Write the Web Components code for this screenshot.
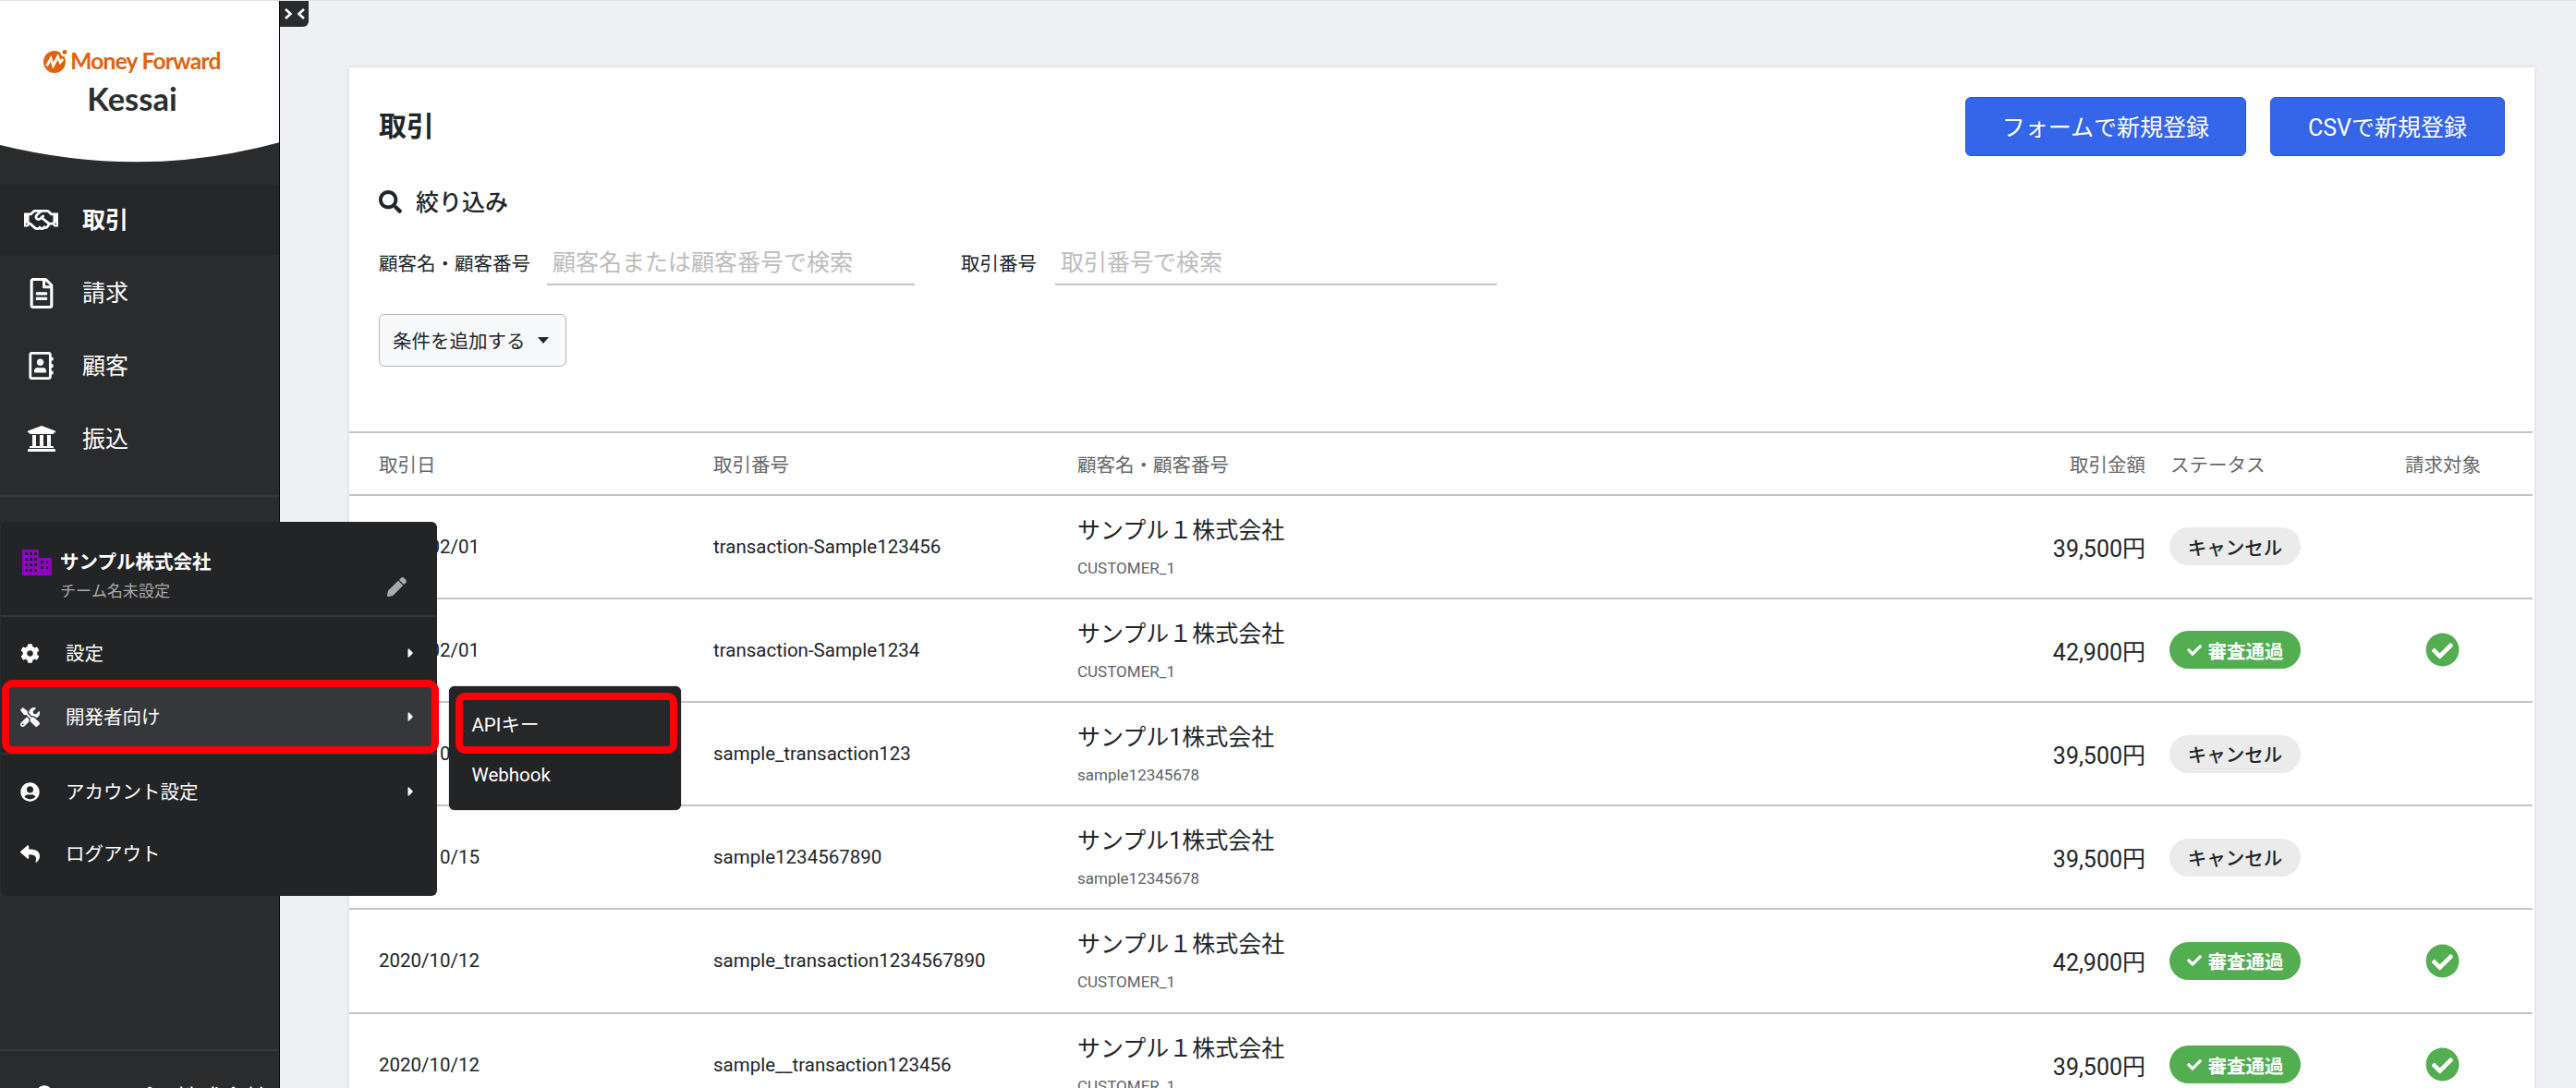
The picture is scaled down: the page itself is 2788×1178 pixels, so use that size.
<!DOCTYPE html>
<html lang="ja">
<head>
<meta charset="utf-8">
<title>取引 | Money Forward Kessai</title>
<style>
  html, body { margin: 0; height: 100%; overflow: hidden; }
  body { font-family: Roboto, "Noto Sans CJK JP", sans-serif; color: #212529; background: #eff0f3; }
</style>
</head>
<body>
<app-shell>
  <app-sidebar slot="side">
    <side-item icon="handshake" active>取引</side-item>
    <side-item icon="file">請求</side-item>
    <side-item icon="book">顧客</side-item>
    <side-item icon="bank">振込</side-item>
  </app-sidebar>

  <account-menu slot="overlay">
    <menu-item icon="cog" arrow>設定</menu-item>
    <menu-item icon="tools" arrow marked>開発者向け</menu-item>
    <menu-item slot="lower" icon="user" arrow>アカウント設定</menu-item>
    <menu-item slot="lower" icon="reply">ログアウト</menu-item>
    <sub-item slot="sub" marked>APIキー</sub-item>
    <sub-item slot="sub">Webhook</sub-item>
  </account-menu>

  <tx-card>
    <tx-row date="2021/02/01" no="transaction-Sample123456" name="サンプル１株式会社" code="CUSTOMER_1" amount="39,500円" status="cancel"></tx-row>
    <tx-row date="2021/02/01" no="transaction-Sample1234" name="サンプル１株式会社" code="CUSTOMER_1" amount="42,900円" status="ok"></tx-row>
    <tx-row date="2020/10/15" no="sample_transaction123" name="サンプル1株式会社" code="sample12345678" amount="39,500円" status="cancel"></tx-row>
    <tx-row date="2020/10/15" no="sample1234567890" name="サンプル1株式会社" code="sample12345678" amount="39,500円" status="cancel"></tx-row>
    <tx-row date="2020/10/12" no="sample_transaction1234567890" name="サンプル１株式会社" code="CUSTOMER_1" amount="42,900円" status="ok"></tx-row>
    <tx-row date="2020/10/12" no="sample__transaction123456" name="サンプル１株式会社" code="CUSTOMER_1" amount="39,500円" status="ok"></tx-row>
  </tx-card>
</app-shell>

<script>
// ----- Icones (svg inline) -----
const ICONS = {
  handshake: [640, 512, 'M519.2 127.9l-47.6-47.6A56.252 56.252 0 0 0 432 64H205.2c-14.8 0-29.1 5.9-39.6 16.3L118 127.9H0v255.7h64c17.6 0 31.8-14.2 31.9-31.7h9.1l84.6 76.4c30.9 25.1 73.8 25.7 105.6 3.8 12.5 10.8 26 15.9 41.1 15.9 18.2 0 35.3-7.4 48.8-24 22.1 8.7 48.2 2.6 64-16.8l26.2-32.3c5.6-6.9 9.1-14.8 10.9-23h57.9c.1 17.5 14.4 31.7 31.9 31.7h64V127.9H519.2zM48 351.6c-8.8 0-16-7.2-16-16s7.2-16 16-16 16 7.2 16 16c0 8.9-7.2 16-16 16zm390-6.9l-26.1 32.2c-2.8 3.4-7.8 4-11.3 1.2l-23.9-19.4-30 36.5c-6 7.3-15 4.8-18 2.4l-36.8-31.5-15.6 19.2c-13.9 17.1-39.2 19.7-55.3 6.6l-97.3-88H96V175.8h41.9l61.7-61.6c2-.8 3.7-1.5 5.7-2.3H262l-38.7 35.5c-29.4 26.9-31.1 72.3-4.4 101.3 14.8 16.2 61.2 41.2 101.5 4.4l8.2-7.5 108.2 87.8c3.4 2.8 3.9 7.9 1.2 11.3zm106-40.8h-69.2c-2.3-2.8-4.9-5.4-7.7-7.7l-102.7-83.4 12.5-11.4c6.5-6 7-16.1 1-22.6L367 167.1c-6-6.5-16.1-6.9-22.6-1l-55.2 50.6c-9.5 8.7-25.7 9.4-34.6 0-9.3-9.9-8.5-25.1 1.2-33.9l65.6-60.1c7.4-6.8 17-10.5 27-10.5l83.7-.2c2.1 0 4.1.8 5.5 2.3l61.7 61.6H544v128zm48 47.7c-8.8 0-16-7.2-16-16s7.2-16 16-16 16 7.2 16 16c0 8.9-7.2 16-16 16z'],
  file: [384, 512, 'M288 248v28c0 6.6-5.4 12-12 12H108c-6.6 0-12-5.4-12-12v-28c0-6.6 5.4-12 12-12h168c6.6 0 12 5.4 12 12zm-12 72H108c-6.6 0-12 5.4-12 12v28c0 6.6 5.4 12 12 12h168c6.6 0 12-5.4 12-12v-28c0-6.6-5.4-12-12-12zm108-188.1V464c0 26.5-21.5 48-48 48H48c-26.5 0-48-21.5-48-48V48C0 21.5 21.5 0 48 0h204.1C264.8 0 277 5.1 286 14.1L369.9 98c9 8.9 14.1 21.2 14.1 33.9zm-128-80V128h76.1L256 51.9zM336 464V176H232c-13.3 0-24-10.7-24-24V48H48v416h288z'],
  book: [448, 512, 'M436 160c6.6 0 12-5.4 12-12v-40c0-6.6-5.4-12-12-12h-20V48c0-26.5-21.5-48-48-48H48C21.5 0 0 21.5 0 48v416c0 26.5 21.5 48 48 48h320c26.5 0 48-21.5 48-48v-48h20c6.6 0 12-5.4 12-12v-40c0-6.6-5.4-12-12-12h-20v-64h20c6.6 0 12-5.4 12-12v-40c0-6.6-5.4-12-12-12h-20v-64h20zm-68 304H48V48h320v416zM208 256c35.3 0 64-28.7 64-64s-28.7-64-64-64-64 28.7-64 64 28.7 64 64 64zm-89.6 128h179.2c12.4 0 22.4-8.6 22.4-19.2v-19.2c0-31.8-30.1-57.6-67.2-57.6-10.8 0-18.7 8-44.8 8-26.9 0-33.4-8-44.8-8-37.1 0-67.2 25.8-67.2 57.6v19.2c0 10.6 10 19.2 22.4 19.2z'],
  bank: [512, 512, 'M496 128v16a8 8 0 0 1-8 8h-24v12c0 6.627-5.373 12-12 12H60c-6.627 0-12-5.373-12-12v-12H24a8 8 0 0 1-8-8v-16a8 8 0 0 1 4.941-7.392l232-88a7.996 7.996 0 0 1 6.118 0l232 88A8 8 0 0 1 496 128zm-24 304H40c-13.255 0-24 10.745-24 24v16a8 8 0 0 0 8 8h464a8 8 0 0 0 8-8v-16c0-13.255-10.745-24-24-24zM96 192v192H60c-6.627 0-12 5.373-12 12v20h416v-20c0-6.627-5.373-12-12-12h-36V192h-64v192h-64V192h-64v192h-64V192H96z'],
  cog: [512, 512, 'M487.4 315.7l-42.6-24.6c4.3-23.2 4.3-47 0-70.2l42.6-24.6c4.9-2.8 7.1-8.6 5.5-14-11.1-35.6-30-67.8-54.7-94.6-3.8-4.1-10-5.1-14.8-2.3L380.8 110c-17.9-15.4-38.5-27.3-60.8-35.1V25.8c0-5.6-3.9-10.5-9.4-11.7-36.7-8.2-74.3-7.8-109.2 0-5.5 1.2-9.4 6.1-9.4 11.7V75c-22.2 7.9-42.8 19.8-60.8 35.1L88.7 85.5c-4.9-2.8-11-1.9-14.8 2.3-24.7 26.7-43.6 58.9-54.7 94.6-1.7 5.4.6 11.2 5.5 14L67.3 221c-4.3 23.2-4.3 47 0 70.2l-42.6 24.6c-4.9 2.8-7.1 8.6-5.5 14 11.1 35.6 30 67.8 54.7 94.6 3.8 4.1 10 5.1 14.8 2.3l42.6-24.6c17.9 15.4 38.5 27.3 60.8 35.1v49.2c0 5.6 3.9 10.5 9.4 11.7 36.7 8.2 74.3 7.8 109.2 0 5.5-1.2 9.4-6.1 9.4-11.7v-49.2c22.2-7.9 42.8-19.8 60.8-35.1l42.6 24.6c4.9 2.8 11 1.9 14.8-2.3 24.7-26.7 43.6-58.9 54.7-94.6 1.5-5.5-.7-11.3-5.6-14.1zM256 336c-44.1 0-80-35.9-80-80s35.9-80 80-80 80 35.9 80 80-35.9 80-80 80z'],
  tools: [512, 512, 'M501.1 395.7L384 278.6c-23.1-23.1-57.6-27.6-85.4-13.9L192 158.1V96L64 0 0 64l96 128h62.1l106.6 106.6c-13.6 27.8-9.2 62.3 13.9 85.4l117.1 117.1c14.6 14.6 38.2 14.6 52.7 0l52.7-52.7c14.5-14.6 14.5-38.2 0-52.7zM331.7 225c28.3 0 54.9 11 74.9 31l19.4 19.4c15.8-6.9 30.8-16.5 43.8-29.5 37.1-37.1 49.7-89.3 37.9-136.7-2.2-9-13.5-12.1-20.1-5.5l-74.4 74.4-67.9-11.3L334 98.9l74.4-74.4c6.6-6.6 3.4-17.9-5.7-20.2-47.4-11.7-99.6.9-136.6 37.9-28.5 28.5-41.9 66.1-41.2 103.6l82.1 82.1c8.1-1.9 16.5-2.9 24.7-2.9zm-103.9 82l-56.7-56.7L18.7 402.8c-25 25-25 65.5 0 90.5s65.5 25 90.5 0l123.6-123.6c-7.6-19.9-9.9-41.6-5-62.7zM64 472c-13.2 0-24-10.8-24-24 0-13.3 10.7-24 24-24s24 10.7 24 24c0 13.2-10.7 24-24 24z'],
  user: [496, 512, 'M248 8C111 8 0 119 0 256s111 248 248 248 248-111 248-248S385 8 248 8zm0 96c48.6 0 88 39.4 88 88s-39.4 88-88 88-88-39.4-88-88 39.4-88 88-88zm0 344c-58.7 0-111.3-26.6-146.5-68.2 18.8-35.4 55.6-59.8 98.5-59.8 2.4 0 4.8.4 7.1 1.1 13 4.2 26.6 6.9 40.9 6.9 14.3 0 28-2.7 40.9-6.9 2.3-.7 4.7-1.1 7.1-1.1 42.9 0 79.7 24.4 98.5 59.8C359.3 421.4 306.7 448 248 448z'],
  reply: [512, 512, 'M8.309 189.836L184.313 37.851C199.719 24.546 224 35.347 224 56.015v80.053c160.629 1.839 288 34.032 288 186.258 0 61.441-39.581 122.309-83.333 154.132-13.653 9.931-33.111-2.533-28.077-18.631 45.344-145.012-21.507-183.51-176.59-185.742V360c0 20.7-24.3 31.453-39.687 18.164l-176.004-152c-11.071-9.562-11.086-26.753 0-36.328z'],
  check: [512, 512, 'M173.898 439.404l-166.4-166.4c-9.997-9.997-9.997-26.206 0-36.204l36.203-36.204c9.997-9.998 26.207-9.998 36.204 0L192 312.69 432.095 72.596c9.997-9.997 26.207-9.997 36.204 0l36.203 36.204c9.997 9.997 9.997 26.206 0 36.204l-294.4 294.401c-9.998 9.997-26.207 9.997-36.204-.001z'],
  checkCircle: [512, 512, 'M504 256c0 136.967-111.033 248-248 248S8 392.967 8 256 119.033 8 256 8s248 111.033 248 248zM227.314 387.314l184-184c6.248-6.248 6.248-16.379 0-22.627l-22.627-22.627c-6.248-6.249-16.379-6.249-22.628 0L216 308.118l-70.059-70.059c-6.248-6.248-16.379-6.248-22.628 0l-22.627 22.627c-6.248 6.248-6.248 16.379 0 22.627l104 104c6.249 6.249 16.379 6.249 22.628.001z'],
  search: [512, 512, 'M505 442.7L405.3 343c-4.5-4.5-10.6-7-17-7H372c27.6-35.3 44-79.7 44-128C416 93.1 322.9 0 208 0S0 93.1 0 208s93.1 208 208 208c48.3 0 92.7-16.4 128-44v16.3c0 6.4 2.5 12.5 7 17l99.7 99.7c9.4 9.4 24.6 9.4 33.9 0l28.3-28.3c9.4-9.4 9.4-24.6.1-34zM208 336c-70.7 0-128-57.2-128-128 0-70.7 57.2-128 128-128 70.7 0 128 57.2 128 128 0 70.7-57.2 128-128 128z'],
  pencil: [512, 512, 'M497.9 142.1l-46.1 46.1c-4.7 4.7-12.3 4.7-17 0l-111-111c-4.7-4.7-4.7-12.3 0-17l46.1-46.1c18.7-18.7 49.1-18.7 67.9 0l60.1 60.1c18.8 18.7 18.8 49.1 0 67.9zM284.2 99.8L21.6 362.4.4 483.9c-2.9 16.4 11.4 30.6 27.8 27.8l121.5-21.3 262.6-262.6c4.7-4.7 4.7-12.3 0-17l-111-111c-4.8-4.7-12.4-4.7-17.1 0z'],
  caret: [192, 512, 'M0 384.662V127.338c0-17.818 21.543-26.741 34.142-14.142l128.662 128.662c7.81 7.81 7.81 20.474 0 28.284L34.142 398.804C21.543 411.404 0 402.48 0 384.662z']
};

function icon(name, w, h) {
  const [vw, vh, d] = ICONS[name];
  return `<svg width="${w}" height="${h}" viewBox="0 0 ${vw} ${vh}" fill="currentColor" aria-hidden="true"><path d="${d}"/></svg>`;
}

// colunas da tabela, mesmas no cabecalho e nas linhas
const COLS = '362px 394px 700px 456px 281px 84px';

// ----- Casca da pagina -----
class AppShell extends HTMLElement {
  constructor() {
    super();
    const shadow = this.attachShadow({ mode: 'open' });
    shadow.innerHTML = `
      <style>
        :host {
          display: grid;
          grid-template-columns: 303px 1fr;
          height: 1178px;
          box-sizing: border-box;
          border-top: 1px solid #e3e3e5;
          position: relative;
          overflow: hidden;
        }
        .main {
          padding: 72px 45px 0 75px;
          min-width: 0;
          overflow: hidden;
        }
        .toggle {
          position: absolute;
          left: 303px;
          top: 0;
          width: 31px;
          height: 28px;
          background: #2a2b2d;
          border-radius: 0 0 6px 0;
          display: flex;
          align-items: center;
          justify-content: center;
        }
      </style>
      <slot name="side"></slot>
      <div class="main"><slot></slot></div>
      <div class="toggle">
        <svg width="22" height="12" viewBox="0 0 22 12" fill="none" stroke="#fff" stroke-width="2.6">
          <path d="M1 1l5.5 5L1 11M21 1l-5.5 5L21 11"/>
        </svg>
      </div>
      <slot name="overlay"></slot>
    `;
  }
}
customElements.define('app-shell', AppShell);

// ----- Menu lateral -----
class AppSidebar extends HTMLElement {
  constructor() {
    super();
    const shadow = this.attachShadow({ mode: 'open' });
    shadow.innerHTML = `
      <style>
        :host {
          display: flex;
          flex-direction: column;
          height: 1177px;
          background: #2a2b2d;
          border-right: 1px solid #0c0c0c;
          box-sizing: border-box;
          overflow: hidden;
        }
        .brand {
          height: 175px;
          flex: none;
          background: #fff;
          clip-path: path('M0 0H303V153Q155 194 0 156Z');
          display: flex;
          flex-direction: column;
          align-items: center;
          padding: 50px 16px 0 0;
          box-sizing: border-box;
        }
        .mf {
          display: flex;
          align-items: center;
          gap: 3px;
          color: #e0620d;
          font: 700 24.5px/30px Lato, sans-serif;
          letter-spacing: -0.75px;
        }
        .kessai {
          font: 700 34.5px/38px Lato, sans-serif;
          color: #2d2e30;
          margin-top: 7px;
        }
        nav {
          margin-top: 24px;
          display: flex;
          flex-direction: column;
          gap: 3px;
        }
        .footer {
          margin-top: auto;
          flex: none;
          height: 42px;
          border-top: 2px solid #38393c;
          box-sizing: border-box;
          padding: 37px 0 0 39px;
          display: flex;
          gap: 34px;
          color: #fff;
          font-size: 25px;
          line-height: 30px;
          overflow: hidden;
        }
        .rule {
          margin-top: 23px;
          border-top: 2px solid #38393c;
        }
        .footer svg { flex: none; }
      </style>
      <div class="brand">
        <div class="mf">
          <svg width="26" height="26" viewBox="0 0 26 26">
            <circle cx="12" cy="14" r="12" fill="#e0620d"/>
            <circle cx="22.5" cy="4" r="4.2" fill="#fff"/>
            <circle cx="23" cy="3.4" r="2.4" fill="#e0620d"/>
            <path d="M3.5 18.5L8 10.5l2.6 7.5 5-9.5 2.6 6 3-3.5" fill="none" stroke="#fff" stroke-width="2.8"/>
          </svg>
          <span>Money Forward</span>
        </div>
        <div class="kessai">Kessai</div>
      </div>
      <nav><slot></slot></nav>
      <div class="rule"></div>
      <div class="footer">
        ${icon('user', 18, 18)}
        <span>サンプル株式会社</span>
      </div>
    `;
  }
}
customElements.define('app-sidebar', AppSidebar);

class SideItem extends HTMLElement {
  constructor() {
    super();
    const shadow = this.attachShadow({ mode: 'open' });
    const name = this.getAttribute('icon');
    const sizes = { handshake: [37, 30], file: [26, 33], book: [27, 30], bank: [32, 32] };
    const [w, h] = sizes[name];
    shadow.innerHTML = `
      <style>
        :host {
          display: flex;
          align-items: center;
          height: 76px;
          color: #fff;
          font-size: 25px;
        }
        :host([active]) {
          background: #252628;
          font-weight: 700;
        }
        .ic {
          width: 89px;
          flex: none;
          display: flex;
          justify-content: center;
        }
        .txt { position: relative; top: -2px; }
      </style>
      <span class="ic">${icon(name, w, h)}</span>
      <span class="txt"><slot></slot></span>
    `;
  }
}
customElements.define('side-item', SideItem);

// ----- Menu da conta (popup) -----
class AccountMenu extends HTMLElement {
  constructor() {
    super();
    const shadow = this.attachShadow({ mode: 'open' });
    shadow.innerHTML = `
      <style>
        :host {
          position: absolute;
          left: 1px;
          top: 564px;
          width: 472px;
          height: 405px;
          background: #232426;
          border-radius: 6px;
          color: #fff;
          font-size: 20.5px;
          display: flex;
          flex-direction: column;
        }
        .head {
          flex: none;
          box-sizing: border-box;
          padding: 29px 33px 0 23px;
          display: flex;
          gap: 9px;
          border-bottom: 2px solid #343538;
          height: 103px;
        }
        .head .logo { flex: none; margin-top: 1px; }
        .who { flex: 1; }
        .name { font-weight: 700; line-height: 30px; }
        .team { font-size: 17.1px; line-height: 25px; margin-top: 4px; color: #a9aaac; }
        .pen { color: #a9aaac; margin-top: 31px; flex: none; }
        .upper {
          display: flex;
          flex-direction: column;
          gap: 5px;
          padding: 7px 0 7px;
          border-bottom: 2px solid #343538;
        }
        .lower {
          display: flex;
          flex-direction: column;
          gap: 3px;
          padding-top: 8px;
        }
        .sub {
          position: absolute;
          left: 485px;
          top: 178px;
          width: 251px;
          box-sizing: border-box;
          padding: 15px 12px 13px 14.5px;
          background: #232426;
          border-radius: 6px;
          box-shadow: 0 0 1px #000;
          display: flex;
          flex-direction: column;
          gap: 6px;
        }
      </style>
      <div class="head">
        <svg class="logo" width="32" height="28" viewBox="0 0 32 28">
          <path fill="#8a06bf" fill-rule="evenodd" d="M0 0h18v9h14v19H0zM3 3v3h3V3zm5 0v3h3V3zm5 0v3h3V3zM3 9v3h3V9zm5 0v3h3V9zm5 0v3h3V9zm7 3v3h3v-3zm6 0v3h2v-3zM3 15v3h3v-3zm5 0v3h3v-3zm5 0v3h3v-3zm7 3v3h3v-3zm6 0v3h2v-3zM3 21v3h3v-3zm5 0v3h3v-3zm5 0v3h3v-3z"/>
        </svg>
        <div class="who">
          <div class="name">サンプル株式会社</div>
          <div class="team">チーム名未設定</div>
        </div>
        <span class="pen">${icon('pencil', 21, 21)}</span>
      </div>
      <div class="upper"><slot></slot></div>
      <div class="lower"><slot name="lower"></slot></div>
      <div class="sub"><slot name="sub"></slot></div>
    `;
  }
}
customElements.define('account-menu', AccountMenu);

class MenuItem extends HTMLElement {
  constructor() {
    super();
    const shadow = this.attachShadow({ mode: 'open' });
    const arrow = this.hasAttribute('arrow') ? icon('caret', 7, 16) : '';
    shadow.innerHTML = `
      <style>
        :host {
          display: flex;
          align-items: center;
          height: 64px;
          margin: 0 6px 0 9px;
          padding: 0 19px 0 12px;
          border-radius: 3px;
          position: relative;
        }
        :host([marked]) { background: #36373a; }
        /* marcacao vermelha por cima do item */
        :host([marked])::after {
          content: "";
          position: absolute;
          inset: -8px;
          border: 8px solid #fb0007;
          border-radius: 12px;
        }
        .ic {
          width: 21px;
          flex: none;
          margin-right: 28px;
          display: flex;
          justify-content: center;
        }
        .txt { flex: 1; position: relative; top: -1px; }
        svg { display: block; }
      </style>
      <span class="ic">${icon(this.getAttribute('icon'), 21, 21)}</span>
      <span class="txt"><slot></slot></span>
      ${arrow}
    `;
  }
}
customElements.define('menu-item', MenuItem);

class SubItem extends HTMLElement {
  constructor() {
    super();
    const shadow = this.attachShadow({ mode: 'open' });
    shadow.innerHTML = `
      <style>
        :host {
          display: flex;
          align-items: center;
          height: 50px;
          padding: 0 10px;
          position: relative;
          font-size: 20.5px;
          color: #fff;
        }
        :host([marked]) { background: #262729; }
        :host([marked])::after {
          content: "";
          position: absolute;
          inset: -8px;
          border: 8px solid #fb0007;
          border-radius: 10px;
        }
      </style>
      <slot></slot>
    `;
  }
}
customElements.define('sub-item', SubItem);

// ----- Cartao de transacoes -----
class TxCard extends HTMLElement {
  constructor() {
    super();
    const shadow = this.attachShadow({ mode: 'open' });
    shadow.innerHTML = `
      <style>
        :host {
          display: block;
          background: #fff;
          box-shadow: 0 0 4px rgba(0,0,0,.12);
          height: 1200px;
          padding-top: 32px;
          box-sizing: border-box;
        }
        .top {
          display: flex;
          align-items: center;
          height: 64px;
          padding: 0 32px;
        }
        h1 {
          flex: 1;
          margin: 0 0 6px;
          font-size: 30px;
          font-weight: 700;
        }
        .btn {
          height: 64px;
          box-sizing: border-box;
          margin-left: 26px;
          padding-bottom: 2px;
          display: flex;
          align-items: center;
          justify-content: center;
          background: #3565e8;
          border: 1px solid #2b55d4;
          border-radius: 6px;
          color: #fff;
          font-size: 25px;
        }
        .b1 { width: 304px; }
        .b2 { width: 254px; }
        .filter {
          padding: 0 32px;
        }
        .filter h2 {
          margin: 34px 0 0;
          height: 30px;
          display: flex;
          align-items: center;
          gap: 15px;
          font-size: 25px;
          font-weight: 500;
        }
        .filter h2 span { position: relative; top: -1px; }
        .fields {
          margin-top: 30px;
          display: flex;
          height: 46px;
        }
        .field { display: flex; align-items: center; height: 100%; }
        .field label { font-size: 20.5px; position: relative; top: -2px; }
        .inp {
          height: 100%;
          box-sizing: border-box;
          border-bottom: 2px solid #c4c4c4;
          display: flex;
          align-items: center;
          padding: 0 0 6px 6px;
          color: #bdbdbd;
          font-size: 25px;
        }
        .i1 { width: 398px; margin-left: 18px; margin-right: 50px; }
        .i2 { width: 478px; margin-left: 20px; }
        .add {
          margin-top: 31px;
          width: 203px;
          height: 57px;
          box-sizing: border-box;
          border: 1px solid #b7b8ba;
          border-radius: 6px;
          background: #f8f9fa;
          display: flex;
          align-items: center;
          padding-left: 14px;
          gap: 13px;
          font-size: 20.5px;
        }
        .add span { position: relative; top: -1px; }
        .add i {
          width: 0;
          height: 0;
          border-left: 6px solid transparent;
          border-right: 6px solid transparent;
          border-top: 7px solid #212529;
        }
        .thead {
          margin-top: 70px;
          margin-right: 2px;
          height: 69.6px;
          box-sizing: border-box;
          border-top: 2px solid #c4c4c4;
          border-bottom: 2px solid #c4c4c4;
          padding-left: 32px;
          display: grid;
          grid-template-columns: ${COLS};
          align-items: center;
          font-size: 20.5px;
          color: #65686b;
          white-space: nowrap;
        }
        .r { text-align: right; }
        .s { padding-left: 27px; }
        .rows { margin-right: 2px; }
      </style>
      <div class="top">
        <h1>取引</h1>
        <div class="btn b1">フォームで新規登録</div>
        <div class="btn b2">CSVで新規登録</div>
      </div>
      <div class="filter">
        <h2>${icon('search', 25, 25)}<span>絞り込み</span></h2>
        <div class="fields">
          <div class="field"><label>顧客名・顧客番号</label><div class="inp i1">顧客名または顧客番号で検索</div></div>
          <div class="field"><label>取引番号</label><div class="inp i2">取引番号で検索</div></div>
        </div>
        <div class="add"><span>条件を追加する</span><i></i></div>
      </div>
      <div class="thead">
        <div>取引日</div><div>取引番号</div><div>顧客名・顧客番号</div>
        <div class="r">取引金額</div><div class="s">ステータス</div><div>請求対象</div>
      </div>
      <div class="rows"><slot></slot></div>
    `;
  }
}
customElements.define('tx-card', TxCard);

class TxRow extends HTMLElement {
  constructor() {
    super();
    const shadow = this.attachShadow({ mode: 'open' });
    const attr = n => this.getAttribute(n);
    const ok = attr('status') === 'ok';
    const badge = ok
      ? `<span class="badge ok">${icon('check', 16, 16)}<span>審査通過</span></span>`
      : `<span class="badge">キャンセル</span>`;
    const billed = ok ? `<span class="bill">${icon('checkCircle', 37, 37)}</span>` : '';
    shadow.innerHTML = `
      <style>
        :host {
          display: grid;
          grid-template-columns: ${COLS};
          align-items: center;
          height: 112.2px;
          box-sizing: border-box;
          border-bottom: 2px solid #c4c4c4;
          padding-left: 32px;
          font-size: 20.5px;
        }
        .name { font-size: 25px; line-height: 37px; }
        .code { font-size: 17px; line-height: 25px; margin-top: 10px; color: #5f6367; }
        .amount { font-size: 25px; text-align: right; }
        .st { padding-left: 26px; }
        .badge {
          width: 142px;
          height: 41px;
          border-radius: 21px;
          background: #ebebeb;
          display: flex;
          align-items: center;
          justify-content: center;
          font-weight: 500;
        }
        .badge.ok {
          background: #52ae50;
          color: #fff;
          font-weight: 700;
          gap: 7px;
        }
        .bill {
          display: flex;
          justify-content: center;
          width: 80px;
          color: #52ae50;
        }
      </style>
      <div>${attr('date')}</div>
      <div>${attr('no')}</div>
      <div>
        <div class="name">${attr('name')}</div>
        <div class="code">${attr('code')}</div>
      </div>
      <div class="amount">${attr('amount')}</div>
      <div class="st">${badge}</div>
      <div>${billed}</div>
    `;
  }
}
customElements.define('tx-row', TxRow);
</script>
</body>
</html>
